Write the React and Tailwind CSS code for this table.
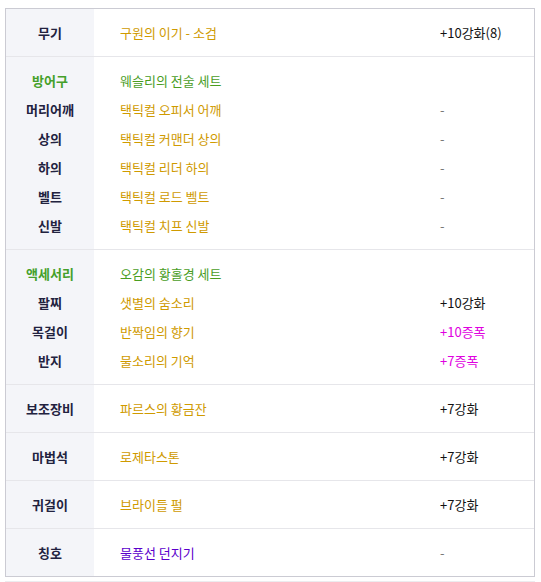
import React from 'react';

const GOLD = 'text-[#cf9a00]';
const GREEN = 'text-[#4a9d1f]';

const groups = [
  { rows: [{ label: '무기', item: '구원의 이기 - 소검', color: GOLD, value: '+10강화(8)' }] },
  {
    rows: [
      { label: '방어구', labelGreen: true, item: '웨슬리의 전술 세트', color: GREEN, value: '' },
      { label: '머리어깨', item: '택틱컬 오피서 어깨', color: GOLD, value: '-', dash: true },
      { label: '상의', item: '택틱컬 커맨더 상의', color: GOLD, value: '-', dash: true },
      { label: '하의', item: '택틱컬 리더 하의', color: GOLD, value: '-', dash: true },
      { label: '벨트', item: '택틱컬 로드 벨트', color: GOLD, value: '-', dash: true },
      { label: '신발', item: '택틱컬 치프 신발', color: GOLD, value: '-', dash: true },
    ],
  },
  {
    rows: [
      { label: '액세서리', labelGreen: true, item: '오감의 황홀경 세트', color: GREEN, value: '' },
      { label: '팔찌', item: '샛별의 숨소리', color: GOLD, value: '+10강화' },
      { label: '목걸이', item: '반짝임의 향기', color: GOLD, value: '+10증폭', amp: true },
      { label: '반지', item: '물소리의 기억', color: GOLD, value: '+7증폭', amp: true },
    ],
  },
  { rows: [{ label: '보조장비', item: '파르스의 황금잔', color: GOLD, value: '+7강화' }] },
  { rows: [{ label: '마법석', item: '로제타스톤', color: GOLD, value: '+7강화' }] },
  { rows: [{ label: '귀걸이', item: '브라이들 펄', color: GOLD, value: '+7강화' }] },
  { rows: [{ label: '칭호', item: '물풍선 던지기', color: 'text-[#5b00cc]', value: '-', dash: true }] },
];

const valueColor = (r) => (r.amp ? 'text-[#e000e0]' : r.dash ? 'text-[#777777]' : 'text-[#111111]');

export default function App() {
  return (
    <div className="w-[541px] h-[582px] bg-white pt-[8px] pl-[5px] font-['Noto_Sans_CJK_KR','Noto_Sans',sans-serif] text-[13px]">
      <div className="w-[530px] border border-[#cbcbd3]">
        {groups.map((g, gi) => (
          <div
            key={gi}
            className={`grid grid-cols-[88px_320px_1fr] ${gi > 0 ? 'border-t border-[#e6e6ea]' : ''}`}
          >
            <div className="bg-[#f4f5f9] py-[9px] flex flex-col">
              {g.rows.map((r, i) => (
                <div
                  key={i}
                  className={`h-[29px] leading-[29px] text-center font-bold ${r.labelGreen ? 'text-[#45a02a]' : 'text-[#22223f]'}`}
                >
                  {r.label}
                </div>
              ))}
            </div>
            <div className="py-[9px] pl-[26px] flex flex-col">
              {g.rows.map((r, i) => (
                <div key={i} className={`h-[29px] leading-[29px] ${r.color}`}>
                  {r.item}
                </div>
              ))}
            </div>
            <div className="py-[9px] pl-[26px] flex flex-col">
              {g.rows.map((r, i) => (
                <div key={i} className={`h-[29px] leading-[29px] ${valueColor(r)}`}>
                  {r.value}
                </div>
              ))}
            </div>
          </div>
        ))}
      </div>
      <div className="mt-[4px] w-[530px] border-t border-[#ececef]" />
    </div>
  );
}
